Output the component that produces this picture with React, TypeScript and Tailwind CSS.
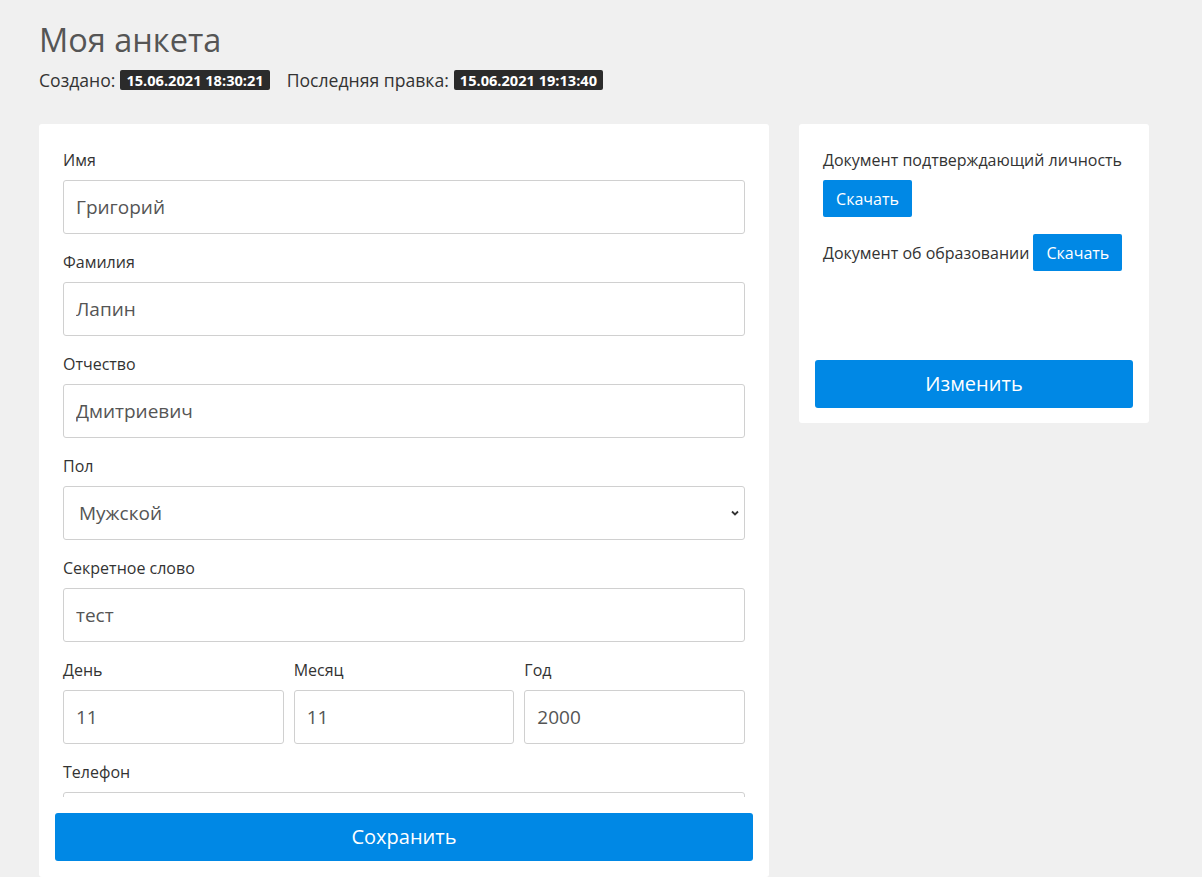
import React from 'react';

const font = { fontFamily: '"Open Sans", "Noto Sans", sans-serif' };

const Field = ({ label, value }: { label: string; value: string }) => (
    <div className="mb-[18px]">
        <div className="text-[16px] leading-5 text-[#333] mb-[10px]">{label}</div>
        <input
            readOnly
            value={value}
            className="w-full h-[54px] px-3 border border-[#d0d0d0] rounded-[3px] text-[19px] text-[#555] outline-none bg-white"
        />
    </div>
);

const App = () => {
    return (
        <div className="min-h-[877px] bg-[#f0f0f0] px-[39px] pt-[19px]" style={font}>
            <h1 className="text-[32.5px] leading-[42px] text-[#555]">Моя анкета</h1>
            <div className="flex items-center mt-[6px] text-[17.6px] text-[#333]">
                <span>Создано:</span>
                <span className="ml-[5px] bg-[#2b2b2b] text-white text-[14.6px] font-bold px-[6px] leading-[20px] rounded-[2px]">15.06.2021 18:30:21</span>
                <span className="ml-[17px]">Последняя правка:</span>
                <span className="ml-[5px] bg-[#2b2b2b] text-white text-[14.6px] font-bold px-[6px] leading-[20px] rounded-[2px]">15.06.2021 19:13:40</span>
            </div>

            <div className="flex items-start gap-[30px] mt-[31px]">
                <div className="w-[730px] h-[753px] bg-white rounded-[3px] flex flex-col">
                    <div className="h-[673px] overflow-hidden px-6 pt-[26px]">
                        <Field label="Имя" value="Григорий" />
                        <Field label="Фамилия" value="Лапин" />
                        <Field label="Отчество" value="Дмитриевич" />
                        <div className="mb-[18px]">
                            <div className="text-[16px] leading-5 text-[#333] mb-[10px]">Пол</div>
                            <div className="relative">
                                <select className="w-full h-[54px] pl-[15px] pr-8 border border-[#d0d0d0] rounded-[3px] text-[19px] text-[#555] bg-white appearance-none outline-none">
                                    <option>Мужской</option>
                                </select>
                                <svg className="absolute right-[5px] top-[23px]" width="10" height="8" viewBox="0 0 10 8">
                                    <path d="M2 2.5 L5 5.5 L8 2.5" stroke="#333" strokeWidth="1.8" fill="none" />
                                </svg>
                            </div>
                        </div>
                        <Field label="Секретное слово" value="тест" />
                        <div className="flex gap-[10px] mb-[18px]">
                            <div className="flex-1">
                                <div className="text-[16px] leading-5 text-[#333] mb-[10px]">День</div>
                                <input readOnly value="11" className="w-full h-[54px] px-3 border border-[#d0d0d0] rounded-[3px] text-[19px] text-[#555] outline-none" />
                            </div>
                            <div className="flex-1">
                                <div className="text-[16px] leading-5 text-[#333] mb-[10px]">Месяц</div>
                                <input readOnly value="11" className="w-full h-[54px] px-3 border border-[#d0d0d0] rounded-[3px] text-[19px] text-[#555] outline-none" />
                            </div>
                            <div className="flex-1">
                                <div className="text-[16px] leading-5 text-[#333] mb-[10px]">Год</div>
                                <input readOnly value="2000" className="w-full h-[54px] px-3 border border-[#d0d0d0] rounded-[3px] text-[19px] text-[#555] outline-none" />
                            </div>
                        </div>
                        <Field label="Телефон" value="" />
                    </div>
                    <button className="mx-4 mt-4 h-[48px] bg-[#0088e5] rounded-[3px] text-white text-[20px]">Сохранить</button>
                </div>

                <div className="w-[350px] bg-white rounded-[3px] flex flex-col">
                    <div className="px-6 pt-[26px] h-[219px]">
                        <div className="text-[16px] leading-5 text-[#333] whitespace-nowrap">Документ подтверждающий личность</div>
                        <button className="mt-[10px] h-[37px] w-[89px] bg-[#0088e5] rounded-[2px] text-white text-[16px]">Скачать</button>
                        <div className="flex items-center mt-[17px] gap-[4px]">
                            <span className="text-[16px] leading-5 text-[#333]">Документ об образовании</span>
                            <button className="h-[37px] w-[89px] bg-[#0088e5] rounded-[2px] text-white text-[16px]">Скачать</button>
                        </div>
                    </div>
                    <div className="px-4 pt-[17px] pb-[15px]">
                        <button className="w-full h-[48px] bg-[#0088e5] rounded-[3px] text-white text-[20px]">Изменить</button>
                    </div>
                </div>
            </div>
        </div>
    );
};

export default App;
